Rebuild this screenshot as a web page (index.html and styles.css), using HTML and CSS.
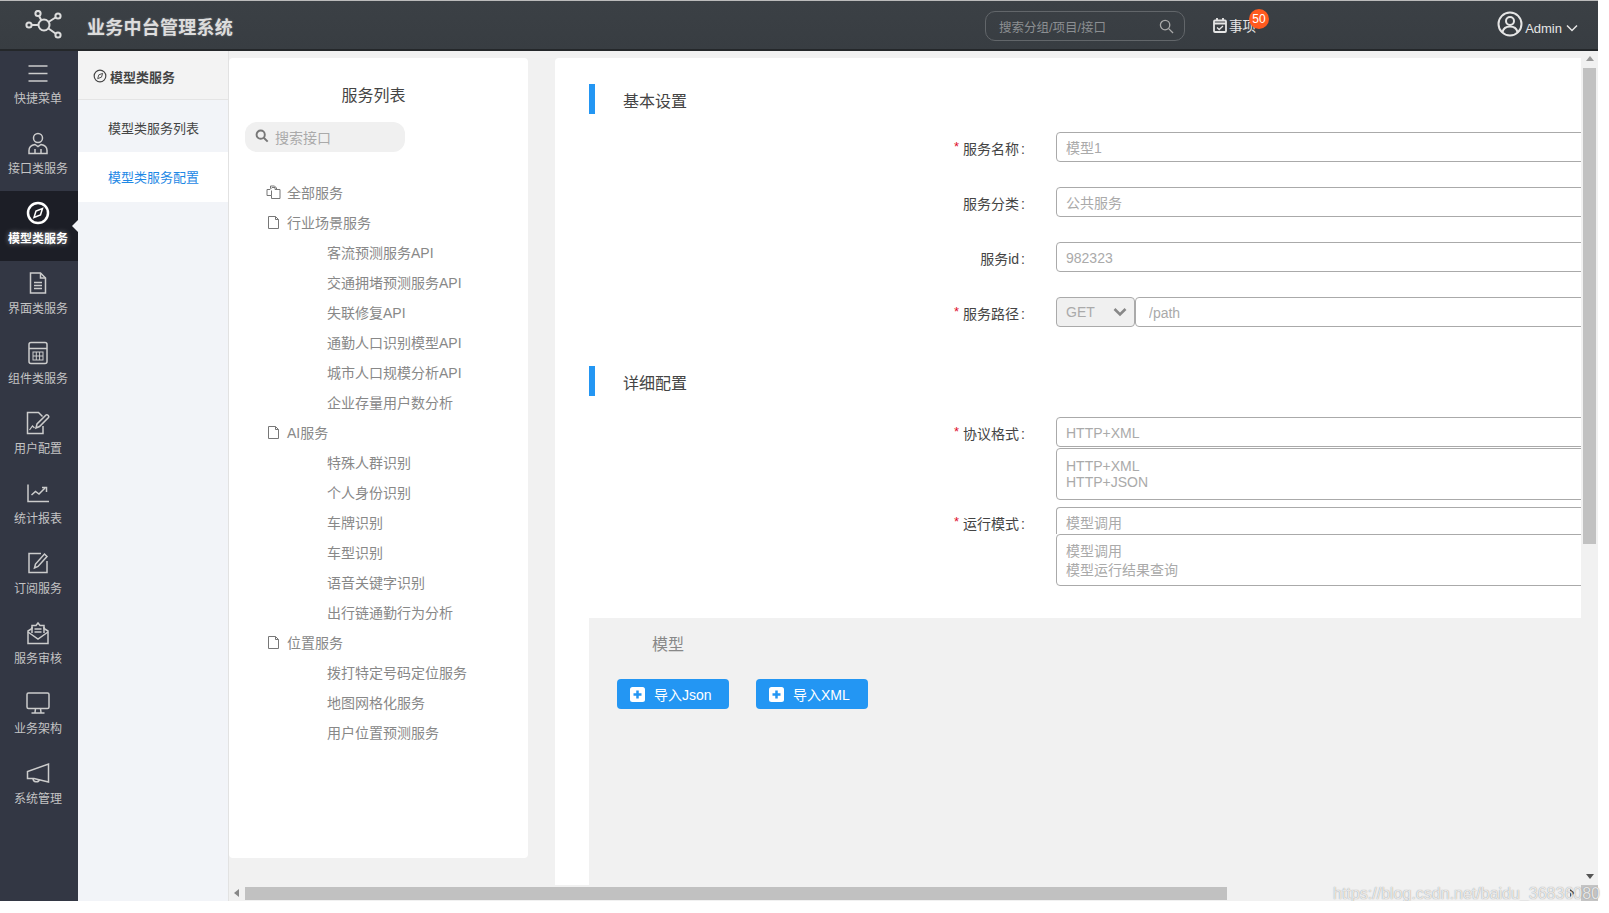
FILE: index.html
```html
<!DOCTYPE html>
<html lang="zh">
<head>
<meta charset="utf-8">
<title>业务中台管理系统</title>
<link rel="stylesheet" href="styles.css">
</head>
<body>
<div class="app">
  <header class="topbar">
    <svg class="logo" viewBox="0 0 38 30" fill="none" stroke="#ddd" stroke-width="2">
      <circle cx="19" cy="15" r="5.5"/><circle cx="4" cy="15" r="2.6"/><circle cx="13" cy="3.5" r="2.6"/><circle cx="33" cy="6" r="2.6"/><circle cx="33" cy="25" r="2.6"/>
      <path d="M7 15h6.500M14 6l2.500 4.500M30.500 7.500l-7 4.500M30.500 23.500l-7-5"/>
    </svg>
    <div class="brand">业务中台管理系统</div>
    <div class="top-search">
      <span class="top-search-text">搜索分组/项目/接口</span>
      <svg class="top-search-icon" viewBox="0 0 16 16" fill="none" stroke="#aaa" stroke-width="1.400"><circle cx="6.500" cy="6.500" r="5"/><path d="M10.300 10.300L15 15"/></svg>
    </div>
    <div class="todo">
      <svg class="todo-icon" viewBox="0 0 14 15" fill="none" stroke="#e6e6e6" stroke-width="1.800"><rect x="1" y="2.500" width="12" height="11.500" rx="1"/><path d="M1 5.500h12M4 0v3M10 0v3"/><path d="M4 9.500l2.200 2 3.800-3.500" stroke-width="1.300"/></svg>
      <span>事项</span>
      <span class="badge">50</span>
    </div>
    <div class="user">
      <svg class="avatar" viewBox="0 0 26 26" fill="none" stroke="#e6e6e6" stroke-width="2"><circle cx="13" cy="13" r="11.500"/><circle cx="13" cy="10" r="4"/><path d="M5.500 21c1-4 4-5.500 7.500-5.500s6.500 1.500 7.500 5.500"/></svg>
      <span class="user-name">Admin</span>
      <svg class="user-chevron" viewBox="0 0 12 8" fill="none" stroke="#e6e6e6" stroke-width="1.500"><path d="M1 1.500l5 5 5-5"/></svg>
    </div>
  </header>

  <div class="body">
    <nav class="sidebar">
      <a class="side-item">
        <svg class="side-icon" viewBox="0 0 24 24" fill="none" stroke="#ccc" stroke-width="1.500"><path d="M2.500 5h19M2.500 12.500h19M2.500 20h19"/></svg>
        <span>快捷菜单</span>
      </a>
      <a class="side-item">
        <svg class="side-icon" viewBox="0 0 24 24" fill="none" stroke="#ccc" stroke-width="1.500"><circle cx="12" cy="7" r="4.500"/><path d="M3 22.500v-3c0-3.500 3-5.500 6-6l3 2 3-2c3 .5 6 2.500 6 6v3z"/><path d="M9 18v4.500M15 18v4.500"/></svg>
        <span>接口类服务</span>
      </a>
      <a class="side-item side-active">
        <svg class="side-icon" viewBox="0 0 24 24" fill="none" stroke="#fff" stroke-width="2.500"><circle cx="12" cy="12" r="10"/><path d="M16.500 7.500l-2 6.500-6.500 2.500 2-6.500z" stroke-width="1.500"/></svg>
        <span>模型类服务</span>
      </a>
      <a class="side-item">
        <svg class="side-icon" viewBox="0 0 24 24" fill="none" stroke="#ccc" stroke-width="1.500"><path d="M4.500 2h10l5 5v15h-15z"/><path d="M14.500 2v5h5M8 11.500h8M8 14.500h8M8 17.500h8"/></svg>
        <span>界面类服务</span>
      </a>
      <a class="side-item">
        <svg class="side-icon" viewBox="0 0 24 24" fill="none" stroke="#ccc" stroke-width="1.500"><rect x="3" y="1.500" width="18" height="21" rx="2"/><path d="M3 7.500h18"/><rect x="7" y="11" width="10" height="8" stroke-width="1"/><path d="M10.300 11v8M13.600 11v8M7 15h10" stroke-width="1"/></svg>
        <span>组件类服务</span>
      </a>
      <a class="side-item">
        <svg class="side-icon" viewBox="0 0 24 24" fill="none" stroke="#ccc" stroke-width="1.500"><path d="M17 15v7.500H1.500v-21h11l4 4"/><path d="M10 17l1-4 9-9c1-1 3.500 1 2.500 2.500l-9 9z"/><path d="M3.500 19l3-4 2 2" stroke-width="1.200"/></svg>
        <span>用户配置</span>
      </a>
      <a class="side-item">
        <svg class="side-icon" viewBox="0 0 24 24" fill="none" stroke="#ccc" stroke-width="1.500"><path d="M2 3.500v17h21"/><path d="M5.500 14l4-3.500 3.500 2.500 6-6"/><path d="M16 6.500h4.500V11" stroke-width="1.500"/></svg>
        <span>统计报表</span>
      </a>
      <a class="side-item">
        <svg class="side-icon" viewBox="0 0 24 24" fill="none" stroke="#ccc" stroke-width="1.500"><path d="M21 10v11.500H3v-19h12"/><path d="M8.500 17l1-4 9-10 2.500 2.500-9 10z"/></svg>
        <span>订阅服务</span>
      </a>
      <a class="side-item">
        <svg class="side-icon" viewBox="0 0 24 24" fill="none" stroke="#ccc" stroke-width="1.500"><path d="M2 10v12.500h20V10l-4-2.500V4.500h-4L12 2l-2 2.500H6v3z"/><path d="M2 11l10 7 10-7M6 6v6M18 6v6M8.500 8h7M8.500 11h7"/></svg>
        <span>服务审核</span>
      </a>
      <a class="side-item">
        <svg class="side-icon" viewBox="0 0 24 24" fill="none" stroke="#ccc" stroke-width="1.500"><rect x="1" y="2" width="22" height="15.500" rx="1.500"/><path d="M9.500 17.500l-.5 4M14.500 17.500l.5 4M5.500 22h13"/></svg>
        <span>业务架构</span>
      </a>
      <a class="side-item">
        <svg class="side-icon" viewBox="0 0 24 24" fill="none" stroke="#ccc" stroke-width="1.500"><path d="M22.500 3v18L8 17.500H1.500v-7z"/><path d="M7 17.500c0 4 5.500 4.500 6.500 1"/></svg>
        <span>系统管理</span>
      </a>
    </nav>

    <aside class="subnav">
      <div class="subnav-head">
        <svg class="subnav-icon" viewBox="0 0 24 24" fill="none" stroke="#444" stroke-width="2"><circle cx="12" cy="12" r="10"/><path d="M16.500 7.500l-2 6.500-6.500 2.500 2-6.500z" stroke-width="1.600"/></svg>
        <span>模型类服务</span>
      </div>
      <a class="subnav-item">模型类服务列表</a>
      <a class="subnav-item subnav-active">模型类服务配置</a>
    </aside>

    <div class="content">
      <div class="content-row">
        <section class="tree-panel">
          <h2 class="tree-title">服务列表</h2>
          <div class="tree-search">
            <svg class="tree-search-icon" viewBox="0 0 16 16" fill="none" stroke="#777" stroke-width="2.200"><circle cx="6.500" cy="6.500" r="4.700"/><path d="M10 10l4.500 4.500"/></svg>
            <span>搜索接口</span>
          </div>
          <ul class="tree">
            <li class="tree-group">
              <svg class="tree-icon" viewBox="0 0 15 15" fill="none" stroke="#777"><path d="M4.500 3.500V1h4l2 2v1M1 4.500h3l2-2h3v2h5v9H5.500v-3H1z"/><path d="M5.500 10.500V5.500"/></svg>
              全部服务
            </li>
            <li class="tree-group">
              <svg class="tree-icon" viewBox="0 0 15 15" fill="none" stroke="#777"><path d="M2.500 1.500h7l3 3v9h-10z"/><path d="M9.500 1.500v3h3"/></svg>
              行业场景服务
            </li>
            <li class="tree-leaf">客流预测服务API</li>
            <li class="tree-leaf">交通拥堵预测服务API</li>
            <li class="tree-leaf">失联修复API</li>
            <li class="tree-leaf">通勤人口识别模型API</li>
            <li class="tree-leaf">城市人口规模分析API</li>
            <li class="tree-leaf">企业存量用户数分析</li>
            <li class="tree-group">
              <svg class="tree-icon" viewBox="0 0 15 15" fill="none" stroke="#777"><path d="M2.500 1.500h7l3 3v9h-10z"/><path d="M9.500 1.500v3h3"/></svg>
              AI服务
            </li>
            <li class="tree-leaf">特殊人群识别</li>
            <li class="tree-leaf">个人身份识别</li>
            <li class="tree-leaf">车牌识别</li>
            <li class="tree-leaf">车型识别</li>
            <li class="tree-leaf">语音关键字识别</li>
            <li class="tree-leaf">出行链通勤行为分析</li>
            <li class="tree-group">
              <svg class="tree-icon" viewBox="0 0 15 15" fill="none" stroke="#777"><path d="M2.500 1.500h7l3 3v9h-10z"/><path d="M9.500 1.500v3h3"/></svg>
              位置服务
            </li>
            <li class="tree-leaf">拨打特定号码定位服务</li>
            <li class="tree-leaf">地图网格化服务</li>
            <li class="tree-leaf">用户位置预测服务</li>
          </ul>
        </section>

        <main class="main-panel">
          <div class="section-head"><h3>基本设置</h3></div>
          <div class="form-row">
            <label class="form-label"><i class="req">*</i>服务名称<span class="colon">:</span></label>
            <input class="field" placeholder="模型1">
          </div>
          <div class="form-row">
            <label class="form-label">服务分类<span class="colon">:</span></label>
            <input class="field" placeholder="公共服务">
          </div>
          <div class="form-row">
            <label class="form-label">服务id<span class="colon">:</span></label>
            <input class="field" placeholder="982323">
          </div>
          <div class="form-row form-row-last">
            <label class="form-label"><i class="req">*</i>服务路径<span class="colon">:</span></label>
            <div class="select">
              <span>GET</span>
              <svg class="select-chevron" viewBox="0 0 14 10" fill="none" stroke="#888" stroke-width="2.600"><path d="M1.500 2l5.500 5.500L12.500 2"/></svg>
            </div>
            <input class="field field-path" placeholder="/path">
          </div>

          <div class="section-head section-second"><h3>详细配置</h3></div>
          <div class="stack-row">
            <label class="form-label"><i class="req">*</i>协议格式<span class="colon">:</span></label>
            <div class="stack">
              <input class="field" placeholder="HTTP+XML">
              <div class="listbox listbox-tight">
                <div>HTTP+XML</div>
                <div>HTTP+JSON</div>
              </div>
            </div>
          </div>
          <div class="stack-row stack-row-second">
            <label class="form-label"><i class="req">*</i>运行模式<span class="colon">:</span></label>
            <div class="stack stack-joined">
              <input class="field field-cut" placeholder="模型调用">
              <div class="listbox listbox-loose">
                <div>模型调用</div>
                <div>模型运行结果查询</div>
              </div>
            </div>
          </div>

          <section class="model-block">
            <h4 class="model-title">模型</h4>
            <div class="model-actions">
              <button class="btn" type="button">
                <svg class="btn-icon" viewBox="0 0 15 15"><rect width="15" height="15" rx="2.500" fill="#fff"/><path d="M7.500 3.500v8M3.500 7.500h8" stroke="#2396f3" stroke-width="2.500"/></svg>
                导入Json
              </button>
              <button class="btn" type="button">
                <svg class="btn-icon" viewBox="0 0 15 15"><rect width="15" height="15" rx="2.500" fill="#fff"/><path d="M7.500 3.500v8M3.500 7.500h8" stroke="#2396f3" stroke-width="2.500"/></svg>
                导入XML
              </button>
            </div>
          </section>
        </main>

        <div class="vscroll">
          <i class="arrow-up"></i>
          <div class="vthumb"></div>
          <i class="arrow-down"></i>
        </div>
      </div>
      <div class="hscroll">
        <i class="arrow-left"></i>
        <div class="hthumb"></div>
        <i class="arrow-right"></i>
        <div class="corner"></div>
      </div>
    </div>
  </div>
  <div class="watermark">https://blog.csdn.net/baidu_36836080</div>
</div>
</body>
</html>
```
FILE: styles.css
```css
* { box-sizing: border-box; }
html, body { margin: 0; padding: 0; background: #fff; overflow: hidden; }
body {
  font-family: "Liberation Sans", "Noto Sans CJK SC", sans-serif;
  font-size: 14px;
  color: #444;
}
.app {
  position: relative;
  width: 1598px;
  height: 901px;
  display: flex;
  flex-direction: column;
}

/* top bar */
.topbar {
  height: 51px;
  flex: none;
  display: flex;
  align-items: center;
  background: linear-gradient(#3b4045, #383d42);
  border-top: 1px solid #bbb;
  border-bottom: 2px solid #24272a;
  color: #e6e6e6;
}
.logo { width: 38px; height: 30px; margin-left: 25px; flex: none; }
.brand {
  margin-left: 24px;
  margin-top: 2px;
  width: 146px;
  font-size: 18px;
  letter-spacing: .25px;
  font-weight: 700;
  color: #ddd;
  text-shadow: 0 0 2px rgba(255, 255, 255, .35);
  flex: none;
}
.top-search {
  margin-left: 752px;
  width: 200px;
  height: 30px;
  border: 1px solid #62666a;
  border-radius: 10px;
  display: flex;
  align-items: center;
  justify-content: space-between;
  padding: 0 10px 0 13px;
  flex: none;
  position: relative;
  top: 1px;
}
.top-search-text { font-size: 12.5px; color: #8c8f92; }
.top-search-icon { width: 15px; height: 15px; }
.todo {
  margin-left: 28px;
  display: flex;
  align-items: center;
  gap: 2px;
  position: relative;
  font-size: 13.5px;
  flex: none;
}
.todo-icon { width: 14px; height: 15px; }
.badge {
  position: absolute;
  left: 36px;
  top: -6px;
  width: 20px;
  height: 20px;
  border-radius: 50%;
  background: #ff5a1f;
  color: #fff;
  font-size: 12px;
  line-height: 20px;
  text-align: center;
}
.user {
  margin-left: auto;
  margin-right: 20px;
  display: flex;
  align-items: center;
  flex: none;
}
.avatar { width: 26px; height: 26px; margin-top: -3px; }
.user-name { margin-left: 2px; font-size: 13px; margin-top: 6px; }
.user-chevron { width: 12px; height: 8px; margin-left: 4px; margin-top: 6px; }

/* shell */
.body { flex: 1; display: flex; min-height: 0; }

/* sidebar */
.sidebar { width: 78px; flex: none; background: #333744; }
.side-item {
  display: flex;
  flex-direction: column;
  align-items: center;
  height: 70px;
  padding: 10px 2px 0 0;
  font-size: 12px;
  line-height: 18px;
  color: #c4c4c4;
  position: relative;
}
.side-icon { width: 24px; height: 24px; margin-bottom: 5px; flex: none; }
.side-active {
  background: #1c1e26;
  color: #fff;
  font-weight: 700;
  text-shadow: 0 0 5px rgba(255, 255, 255, .5);
}
.side-active::after {
  content: "";
  position: absolute;
  right: 0;
  top: 29px;
  border: 6px solid transparent;
  border-right-color: #f2f4f8;
  border-left-width: 0;
}

/* sub navigation */
.subnav {
  width: 151px;
  flex: none;
  background: #f2f4f8;
  border-right: 1px solid #e2e2e2;
}
.subnav-head {
  height: 49px;
  background: #f3f3f3;
  border-bottom: 1px solid #e4e4e4;
  display: flex;
  align-items: center;
  padding: 2px 0 0 15px;
  gap: 3px;
  font-size: 13px;
  font-weight: 700;
  color: #444;
}
.subnav-icon { width: 14px; height: 14px; }
.subnav-item {
  display: block;
  height: 52px;
  line-height: 57px;
  padding-left: 30px;
  font-size: 13px;
  color: #444;
}
.subnav-item + .subnav-item { height: 50px; line-height: 52px; }
.subnav-active { background: #fff; color: #1e88e5; }

/* content area */
.content {
  flex: 1;
  min-width: 0;
  display: flex;
  flex-direction: column;
  background: #f1f1f1;
}
.content-row { flex: 1; display: flex; min-height: 0; }

.tree-panel {
  width: 299px;
  height: 800px;
  margin-top: 7px;
  flex: none;
  background: #fff;
  border-radius: 4px;
}
.tree-title {
  margin: 0;
  padding: 27px 10px 0 0;
  font-size: 16px;
  line-height: 22px;
  font-weight: 400;
  text-align: center;
  color: #444;
}
.tree-search {
  margin: 15px 0 0 16px;
  width: 160px;
  height: 30px;
  border-radius: 12px;
  background: #f0f0f0;
  display: flex;
  align-items: center;
  padding-left: 10px;
  gap: 6px;
  color: #aaa;
}
.tree-search-icon { width: 14px; height: 14px; margin-top: -2px; }
.tree { list-style: none; margin: 26px 0 0; padding: 0; color: #888; }
.tree-group, .tree-leaf { height: 30px; line-height: 30px; }
.tree-group { padding-left: 37px; display: flex; align-items: center; gap: 6px; }
.tree-leaf { padding-left: 98px; }
.tree-icon { width: 15px; height: 15px; margin-top: -2px; flex: none; }

.main-panel {
  margin: 7px 0 0 27px;
  flex: 1;
  min-width: 0;
  background: #fff;
  overflow: hidden;
  padding: 26px 0 0 34px;
  border-radius: 4px 0 0 0;
}
.section-head {
  height: 30px;
  border-left: 6px solid #2396f3;
  padding-left: 28px;
  display: flex;
  align-items: center;
}
.section-head h3 {
  margin: 2px 0 0;
  font-size: 16px;
  font-weight: 400;
  color: #444;
}
.section-second { margin-top: 39px; }

.form-row { display: flex; margin-top: 25px; height: 30px; }
.section-head + .form-row { margin-top: 18px; }
.form-label {
  width: 467px;
  flex: none;
  padding-right: 31px;
  text-align: right;
  font-size: 14px;
  line-height: 35px;
  color: #444;
  white-space: nowrap;
}
.colon { margin-left: 2px; }
.req {
  color: #e0102a;
  font-style: normal;
  font-size: 13px;
  line-height: 0;
  margin-right: 4px;
  vertical-align: 3px;
}
.field {
  width: 700px;
  height: 30px;
  flex: none;
  display: block;
  border: 1px solid #aaa;
  border-radius: 4px;
  padding: 1px 9px 0;
  font: inherit;
  background: #fff;
  outline: none;
}
.field::placeholder { color: #aaa; opacity: 1; }
.select {
  width: 79px;
  height: 30px;
  flex: none;
  border: 1px solid #aaa;
  border-radius: 4px;
  background: #f0f0f0;
  color: #aaa;
  display: flex;
  align-items: center;
  justify-content: space-between;
  padding: 0 7px 0 9px;
}
.select-chevron { width: 14px; height: 10px; }
.field-path { padding-left: 13px; }

.stack-row { display: flex; margin-top: 21px; }
.stack-row-second { margin-top: 7px; }
.stack { display: flex; flex-direction: column; gap: 1px; }
.stack-joined { gap: 0; }
.field-cut { height: 27px; border-bottom: 0; border-radius: 4px 4px 0 0; padding-top: 3px; }
.listbox {
  width: 700px;
  border: 1px solid #aaa;
  border-radius: 4px;
  padding: 0 9px;
  color: #aaa;
}
.listbox-tight { height: 52px; padding-top: 9px; line-height: 16px; }
.listbox-loose { height: 52px; padding-top: 7px; line-height: 19px; }

.model-block {
  margin-top: 32px;
  height: 400px;
  background: #f1f1f1;
  padding: 16px 0 0 28px;
}
.model-title {
  margin: 0 0 0 35px;
  font-size: 16px;
  line-height: 22px;
  font-weight: 400;
  color: #888;
}
.model-actions { display: flex; gap: 27px; margin-top: 23px; }
.btn {
  width: 112px;
  height: 30px;
  border: 0;
  border-radius: 4px;
  background: #2396f3;
  color: #fff;
  font: inherit;
  display: flex;
  align-items: center;
  padding: 0 0 0 13px;
  gap: 9px;
}
.btn-icon { width: 15px; height: 15px; flex: none; }

/* scrollbars */
.vscroll {
  width: 17px;
  flex: none;
  background: #f1f1f1;
  display: flex;
  flex-direction: column;
  align-items: center;
  padding-top: 5px;
}
.arrow-up { border: 4px solid transparent; border-top: 0; border-bottom: 5px solid #999; }
.vthumb { width: 13px; height: 476px; margin-top: 7px; background: #c1c1c1; }
.arrow-down {
  margin-top: auto;
  margin-bottom: 6px;
  border: 4px solid transparent;
  border-bottom: 0;
  border-top: 5px solid #555;
}
.hscroll {
  height: 16px;
  flex: none;
  display: flex;
  align-items: center;
  background: #f1f1f1;
}
.arrow-left {
  margin-left: 5px;
  border: 4px solid transparent;
  border-left: 0;
  border-right: 5px solid #888;
}
.hthumb { width: 982px; height: 13px; margin-left: 6px; background: #c1c1c1; }
.arrow-right {
  margin-left: auto;
  margin-right: 6px;
  border: 4px solid transparent;
  border-right: 0;
  border-left: 5px solid #444;
}
.corner { width: 17px; height: 16px; background: #c4c4c4; }

.watermark {
  position: absolute;
  right: -2px;
  bottom: -3px;
  font-size: 16px;
  line-height: 20px;
  color: rgba(255, 255, 255, .8);
  text-shadow: 0 0 1px rgba(110, 110, 110, .85);
  white-space: nowrap;
}
```
